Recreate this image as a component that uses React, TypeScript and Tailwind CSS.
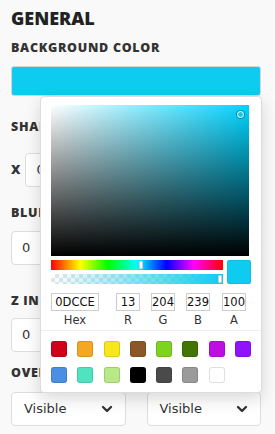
import { ChevronDown } from 'lucide-react';

const swatches = [
  '#d0021b', '#f5a623', '#f8e71c', '#8b572a', '#7ed321', '#417505', '#bd10e0', '#9013fe',
  '#4a90e2', '#50e3c2', '#b8e986', '#000000', '#4a4a4a', '#9b9b9b', '#ffffff',
];

const head = { fontFamily: '"Open Sans", "Liberation Sans", sans-serif' };
const ui = { fontFamily: '"DejaVu Sans", Verdana, sans-serif' };

function Label({ children }: { children: React.ReactNode }) {
  return (
    <div className="text-[12.5px] leading-[14px] font-extrabold tracking-[0.7px] text-[#333]" style={head}>
      {children}
    </div>
  );
}

function NumField({ className = '' }: { className?: string }) {
  return (
    <div className={`h-[34px] bg-white border border-[#ddd] rounded-[4px] flex items-center pl-[10px] text-[13px] text-[#333] ${className}`} style={ui}>
      0
    </div>
  );
}

function Select() {
  return (
    <div className="flex-1 h-[34px] bg-white border border-[#ddd] rounded-[4px] flex items-center justify-between px-3 text-[13px] text-[#333]" style={ui}>
      <span>Visible</span>
      <ChevronDown className="w-4 h-4 -mr-[2px]" strokeWidth={3.5} />
    </div>
  );
}

const fields: [string, string, string, string][] = [
  ['0DCCE', 'Hex', 'w-[48px]', ''],
  ['13', 'R', 'w-[24px]', 'ml-[17px]'],
  ['204', 'G', 'w-[24px]', 'ml-[11px]'],
  ['239', 'B', 'w-[24px]', 'ml-[11px]'],
  ['100', 'A', 'w-[24px]', 'ml-[12px]'],
];

function ColorPicker() {
  return (
    <div className="absolute left-[40px] top-[96px] w-[222px] bg-white rounded-[4px] border border-[#ddd] shadow-[0_6px_16px_rgba(0,0,0,0.15)] pt-[8px]">
      <div className="px-[10px]">
        <div
          className="relative h-[151px] w-[198px]"
          style={{
            background:
              'linear-gradient(to top, #000, rgba(0,0,0,0)), linear-gradient(to right, #fff, #00d4ff)',
          }}
        >
          <div className="absolute left-[186px] top-[6px] w-[7px] h-[7px] rounded-full border-[1.5px] border-white shadow-[0_0_0_1px_rgba(0,0,0,0.3)]" />
        </div>
        <div className="flex gap-[4px] mt-[4px]">
          <div className="flex-1 flex flex-col gap-[4px]">
            <div
              className="relative h-[10px]"
              style={{
                background:
                  'linear-gradient(to right, #f00 0%, #ff0 17%, #0f0 33%, #0ff 50%, #00f 67%, #f0f 83%, #f00 100%)',
              }}
            >
              <div className="absolute left-[88px] top-[1px] w-[4px] h-[8px] bg-white border border-[#ccc] rounded-[1px]" />
            </div>
            <div
              className="relative h-[10px]"
              style={{
                backgroundImage:
                  'linear-gradient(to right, rgba(13,204,239,0), rgba(13,204,239,1)), repeating-conic-gradient(#e6e6e6 0% 25%, #fff 0% 50%)',
                backgroundSize: '100% 100%, 8px 8px',
              }}
            >
              <div className="absolute right-[1px] top-[1px] w-[4px] h-[8px] bg-white border border-[#ccc] rounded-[1px]" />
            </div>
          </div>
          <div className="w-[24px] h-[24px] bg-[#0dccef] rounded-[2px] border border-[#22a9c7]/40" />
        </div>
        <div className="flex mt-[9px] text-[11px] text-[#333]" style={ui}>
          {fields.map(([v, l, w, m]) => (
            <div key={l} className={`flex flex-col items-center ${m}`}>
              <div className={`${w} h-[18px] border border-[#ccc] flex items-center justify-center text-[11.5px] leading-[14px] text-[#111] overflow-hidden`}>
                {v}
              </div>
              <div className="mt-[2px] leading-[14px] text-[11.5px] text-[#333]">{l}</div>
            </div>
          ))}
        </div>
      </div>
      <div className="border-t border-[#eee] mt-[3px] px-[10px] pt-[10px] pb-[9px] grid grid-cols-8 gap-x-[10px] gap-y-[10px]">
        {swatches.map((c) => (
          <div
            key={c}
            className="w-[16px] h-[16px] rounded-[3px] shadow-[inset_0_0_0_1px_rgba(0,0,0,0.12)]"
            style={{ backgroundColor: c }}
          />
        ))}
      </div>
    </div>
  );
}

export default function App() {
  return (
    <div className="relative w-[275px] h-[434px] bg-[#f9f9f9] overflow-hidden">
      <div className="px-[11px] pt-[6px]">
        <div className="text-[18px] font-extrabold text-[#222] leading-[24px]" style={head}>GENERAL</div>
        <div className="mt-[11px]">
          <Label>BACKGROUND COLOR</Label>
        </div>
        <div className="mt-[11px] h-[30px] w-[250px] bg-[#0dccef] rounded-[3px] border border-[#d6d6d6]" />
        <div className="mt-[24px]">
          <Label>SHAPE</Label>
        </div>
        <div className="mt-[19px] flex items-center gap-[5px]">
          <span className="text-[13px] font-extrabold text-[#333]" style={head}>X</span>
          <NumField className="w-[100px]" />
        </div>
        <div className="mt-[19px]">
          <Label>BLUR</Label>
        </div>
        <div className="mt-[11px]">
          <NumField className="w-[114px]" />
        </div>
        <div className="mt-[29px]">
          <Label>Z INDEX</Label>
        </div>
        <div className="mt-[10px]">
          <NumField className="w-[114px]" />
        </div>
        <div className="mt-[14px]">
          <Label>OVERFLOW</Label>
        </div>
        <div className="mt-[12px] flex gap-[21px] w-[250px]">
          <Select />
          <Select />
        </div>
      </div>
      <ColorPicker />
    </div>
  );
}
